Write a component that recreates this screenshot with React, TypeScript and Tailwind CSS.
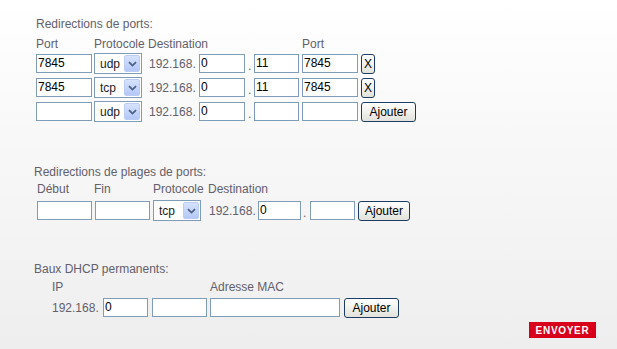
import React from 'react';

const font = { fontFamily: '"Liberation Sans", Arial, sans-serif' };

const Field = ({ w, value = '' }: { w: string; value?: string }) => (
  <div className={`${w} h-[19px] shrink-0 border border-[#7f9db9] bg-white pl-[1px] text-[12px] leading-[17px] text-black`}>
    {value}
  </div>
);

const Select = ({ value }: { value: string }) => (
  <div className="flex h-[21px] w-[48px] shrink-0 items-center justify-between border border-[#7f9db9] bg-white pl-[5px] pr-[1px] text-[12px] text-[#222]">
    <span>{value}</span>
    <div className="flex h-[17px] w-[16px] items-center justify-center rounded-[2px] border border-[#bccdf5] bg-gradient-to-b from-[#d6e2fe] to-[#b4c8f7]">
      <svg width="9" height="6" viewBox="0 0 9 6">
        <path d="M1 1.2 L4.5 4.6 L8 1.2" fill="none" stroke="#4d6185" strokeWidth="1.8" />
      </svg>
    </div>
  </div>
);

const Btn = ({ w, label }: { w: string; label: string }) => (
  <div className={`${w} flex h-[20px] shrink-0 items-center justify-center rounded-[3px] border border-[#1e3d64] bg-gradient-to-b from-white to-[#e3e3dc] text-[12px] text-black`}>
    {label}
  </div>
);

const Title = ({ children, className = '' }: { children: React.ReactNode; className?: string }) => (
  <div className={`h-[14px] text-[12px] leading-[14px] ${className}`}>{children}</div>
);

const PortRow = ({ port = '', proto, a = '0', b = '', dest = '', last }: { port?: string; proto: string; a?: string; b?: string; dest?: string; last?: boolean }) => (
  <div className="flex h-[21px] items-center">
    <Field w="w-[56px]" value={port} />
    <div className="ml-[2px]"><Select value={proto} /></div>
    <span className="ml-[7px] w-[50px] text-[12px]">192.168.</span>
    <Field w="w-[46px]" value={a} />
    <span className="w-[9px] pl-[3px] pt-[5px] text-[12px]">.</span>
    <Field w="w-[45px]" value={b} />
    <div className="ml-[3px]"><Field w="w-[56px]" value={dest} /></div>
    <div className="ml-[3px]">{last ? <Btn w="w-[55px]" label="Ajouter" /> : <Btn w="w-[14px]" label="X" />}</div>
  </div>
);

export default function App() {
  return (
    <div className="flex h-[349px] w-[617px] flex-col bg-gradient-to-b from-white to-[#eeeeee] text-[#63606b]" style={font}>
      {/* Redirections de ports */}
      <div className="ml-[36px] mt-[17px]">
        <Title>Redirections de ports:</Title>
        <div className="mt-[6px] flex h-[14px] text-[12px] leading-[14px]">
          <span className="w-[58px]">Port</span>
          <span className="w-[54px]">Protocole</span>
          <span className="w-[154px]">Destination</span>
          <span>Port</span>
        </div>
        <div className="mt-[2px] flex flex-col gap-[3px]">
          <PortRow port="7845" proto="udp" b="11" dest="7845" />
          <PortRow port="7845" proto="tcp" b="11" dest="7845" />
          <PortRow proto="udp" last />
        </div>
      </div>

      {/* Redirections de plages de ports */}
      <Title className="ml-[34px] mt-[43px]">Redirections de plages de ports:</Title>
      <div className="ml-[37px] mt-[3px] flex h-[14px] text-[12px] leading-[14px]">
        <span className="w-[57px]">Début</span>
        <span className="w-[59px]">Fin</span>
        <span className="w-[55px]">Protocole</span>
        <span>Destination</span>
      </div>
      <div className="ml-[37px] mt-[4px] flex h-[21px] items-center">
        <Field w="w-[55px]" />
        <div className="ml-[3px]"><Field w="w-[55px]" /></div>
        <div className="ml-[3px]"><Select value="tcp" /></div>
        <span className="ml-[8px] w-[49px] text-[12px]">192.168.</span>
        <Field w="w-[43px]" value="0" />
        <span className="w-[9px] pl-[2px] pt-[5px] text-[12px]">.</span>
        <Field w="w-[45px]" />
        <div className="ml-[3px]"><Btn w="w-[52px]" label="Ajouter" /></div>
      </div>

      {/* Baux DHCP permanents */}
      <Title className="ml-[34px] mt-[41px]">Baux DHCP permanents:</Title>
      <div className="ml-[52px] mt-[4px] flex h-[14px] text-[12px] leading-[14px]">
        <span className="w-[158px]">IP</span>
        <span>Adresse MAC</span>
      </div>
      <div className="ml-[52px] mt-[3px] flex h-[21px] items-center">
        <span className="w-[51px] text-[12px]">192.168.</span>
        <Field w="w-[45px]" value="0" />
        <div className="ml-[4px]"><Field w="w-[55px]" /></div>
        <div className="ml-[3px]"><Field w="w-[130px]" /></div>
        <div className="ml-[4px]"><Btn w="w-[55px]" label="Ajouter" /></div>
      </div>

      <div className="mr-[21px] mt-[4px] flex h-[16px] w-[67px] items-center justify-center self-end bg-[#d9001b] text-[10px] font-bold tracking-[0.7px] text-white">
        ENVOYER
      </div>
    </div>
  );
}
